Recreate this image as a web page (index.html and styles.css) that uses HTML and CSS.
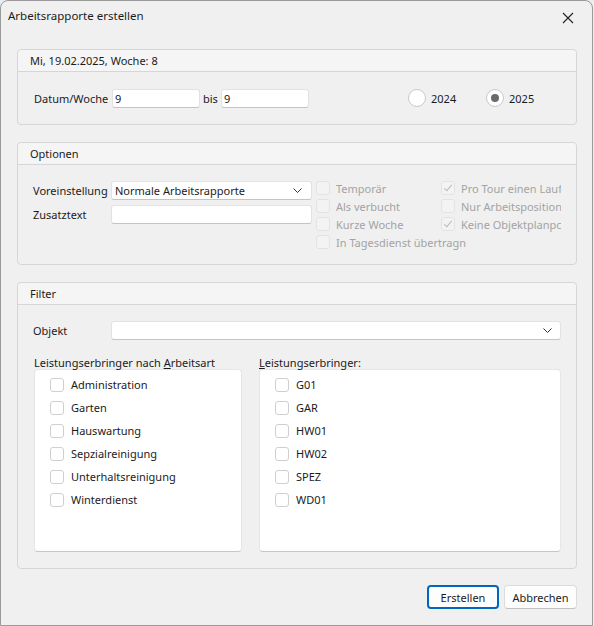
FILE: index.html
```html
<!DOCTYPE html>
<html lang="de">
<head>
    <meta charset="UTF-8">
    <title>Arbeitsrapporte erstellen</title>
    <link rel="stylesheet" href="styles.css">
</head>
<body>
    <div class="window">
        <div class="titlebar">
            <span class="title">Arbeitsrapporte erstellen</span>
            <svg class="close" width="12" height="12" viewBox="0 0 12 12"><path d="M1 1L11 11M11 1L1 11" stroke="#222" stroke-width="1.1" fill="none"/></svg>
        </div>
        <div class="content">
            <div class="group">
                <div class="group-head">Mi, 19.02.2025, Woche: 8</div>
                <div class="group-body row-week">
                    <span class="lbl wide">Datum/Woche</span>
                    <input class="field week" type="text" value="9">
                    <span class="lbl bis">bis</span>
                    <input class="field week" type="text" value="9">
                    <div class="radios">
                        <label class="radio"><span class="dot"></span>2024</label>
                        <label class="radio"><span class="dot on"></span>2025</label>
                    </div>
                </div>
            </div>

            <div class="group">
                <div class="group-head">Optionen</div>
                <div class="group-body options">
                    <div class="opt-form">
                        <div class="opt-row">
                            <span class="lbl wide">Voreinstellung</span>
                            <div class="field combo small">Normale Arbeitsrapporte
                                <svg class="chev" width="9" height="5" viewBox="0 0 9 5"><path d="M0.5 0.5L4.5 4.5L8.5 0.5" stroke="#333" fill="none"/></svg>
                            </div>
                        </div>
                        <div class="opt-row">
                            <span class="lbl wide">Zusatztext</span>
                            <div class="field small"></div>
                        </div>
                    </div>
                    <div class="checks">
                        <label class="chk off"><span class="box"></span>Temporär</label>
                        <label class="chk off"><span class="box checked"></span>Pro Tour einen Lauf</label>
                        <label class="chk off"><span class="box"></span>Als verbucht</label>
                        <label class="chk off"><span class="box"></span>Nur Arbeitsposition</label>
                        <label class="chk off"><span class="box"></span>Kurze Woche</label>
                        <label class="chk off"><span class="box checked"></span>Keine Objektplanpc</label>
                        <label class="chk off span2"><span class="box"></span>In Tagesdienst übertragn</label>
                    </div>
                </div>
            </div>

            <div class="group">
                <div class="group-head">Filter</div>
                <div class="group-body filter">
                    <div class="opt-row">
                        <span class="lbl wide">Objekt</span>
                        <div class="field combo grow">
                            <svg class="chev" width="9" height="5" viewBox="0 0 9 5"><path d="M0.5 0.5L4.5 4.5L8.5 0.5" stroke="#333" fill="none"/></svg>
                        </div>
                    </div>
                    <div class="lists">
                        <div class="list-col left">
                            <div class="list-title">Leistungserbringer nach <u>A</u>rbeitsart</div>
                            <div class="list">
                                <label class="chk"><span class="box"></span>Administration</label>
                                <label class="chk"><span class="box"></span>Garten</label>
                                <label class="chk"><span class="box"></span>Hauswartung</label>
                                <label class="chk"><span class="box"></span>Sepzialreinigung</label>
                                <label class="chk"><span class="box"></span>Unterhaltsreinigung</label>
                                <label class="chk"><span class="box"></span>Winterdienst</label>
                            </div>
                        </div>
                        <div class="list-col right">
                            <div class="list-title"><u>L</u>eistungserbringer:</div>
                            <div class="list">
                                <label class="chk"><span class="box"></span>G01</label>
                                <label class="chk"><span class="box"></span>GAR</label>
                                <label class="chk"><span class="box"></span>HW01</label>
                                <label class="chk"><span class="box"></span>HW02</label>
                                <label class="chk"><span class="box"></span>SPEZ</label>
                                <label class="chk"><span class="box"></span>WD01</label>
                            </div>
                        </div>
                    </div>
                </div>
            </div>

            <div class="buttons">
                <button class="btn primary">Erstellen</button>
                <button class="btn">Abbrechen</button>
            </div>
        </div>
    </div>
</body>
</html>
```

FILE: styles.css
```css
html, body {
    margin: 0;
    padding: 0;
    background-color: #e8eef4;
    font-family: "Noto Sans", "Open Sans", sans-serif;
    font-size: 11px;
    color: #1b1b1b;
}
.window {
    width: 593px;
    height: 626px;
    box-sizing: border-box;
    border: 1px solid #9a9a9a;
    border-radius: 8px 8px 0 0;
    background-color: #f0f0f0;
}
.titlebar {
    height: 33px;
    display: flex;
    align-items: center;
    justify-content: space-between;
    padding: 0 18px 0 7px;
}
.title {
    font-size: 11.5px;
    margin-top: -4px;
}
.content {
    padding: 0 15px 0 16px;
}
.group {
    margin-top: 15px;
    border: 1px solid #d6d6d6;
    border-radius: 4px;
}
.group + .group {
    margin-top: 17px;
}
.group-head {
    height: 21px;
    line-height: 21px;
    padding-left: 12px;
    background-color: #f5f5f5;
    border-bottom: 1px solid #d6d6d6;
    border-radius: 4px 4px 0 0;
}
.field {
    box-sizing: border-box;
    height: 19px;
    background: #fff;
    border: 1px solid #e2e2e2;
    border-bottom-color: #c4c4c4;
    border-radius: 3px;
    font: inherit;
    color: inherit;
    padding: 0 2px;
    outline: none;
    line-height: 17px;
}
.lbl {
    white-space: nowrap;
}
.lbl.wide {
    width: 78px;
    flex-shrink: 0;
}
.row-week {
    height: 52px;
    display: flex;
    align-items: center;
    padding-left: 16px;
}
.week {
    width: 88px;
}
.bis {
    width: 18px;
    margin-left: 3px;
}
.radios {
    display: flex;
    margin-left: 99px;
}
.radio {
    display: flex;
    align-items: center;
    width: 78px;
}
.dot {
    box-sizing: border-box;
    width: 18px;
    height: 18px;
    border-radius: 50%;
    border: 1px solid #c9c9c9;
    background: #fff;
    margin-right: 5px;
    position: relative;
}
.dot.on::after {
    content: "";
    position: absolute;
    left: 4px;
    top: 4px;
    width: 8px;
    height: 8px;
    border-radius: 50%;
    background: #6b6b6b;
}
.options {
    height: 99px;
    display: flex;
    padding: 14px 0 0 15px;
    box-sizing: border-box;
}
.opt-form {
    display: flex;
    flex-direction: column;
    gap: 5px;
    padding-top: 2px;
}
.opt-row {
    display: flex;
    align-items: center;
}
.small {
    width: 201px;
}
.combo {
    display: flex;
    align-items: center;
    justify-content: space-between;
    padding: 0 9px 0 3px;
}
.checks {
    display: grid;
    grid-template-columns: 125px 120px;
    grid-auto-rows: 18px;
    margin-left: 4px;
}
.span2 {
    grid-column: span 2;
}
.chk {
    display: flex;
    align-items: center;
    white-space: nowrap;
    overflow: hidden;
}
.box {
    box-sizing: border-box;
    width: 14px;
    height: 14px;
    border: 1px solid #cfcfcf;
    border-radius: 3px;
    background: #fff;
    margin-right: 7px;
    flex-shrink: 0;
    position: relative;
}
.chk.off {
    color: #a3a3a3;
}
.chk.off .box {
    border-color: #e3e3e3;
    background: #f3f3f3;
    margin-right: 6px;
}
.box.checked::after {
    content: "";
    position: absolute;
    left: 4px;
    top: 1px;
    width: 3px;
    height: 7px;
    border: solid #b9b9b9;
    border-width: 0 1px 1px 0;
    transform: rotate(40deg);
}
.filter {
    height: 263px;
    box-sizing: border-box;
    padding: 16px 15px 0 15px;
}
.grow {
    flex: 1;
    justify-content: flex-end;
    padding-right: 8px;
}
.lists {
    display: flex;
    gap: 17px;
    margin-top: 17px;
    padding-left: 1px;
}
.list-col.left {
    width: 208px;
}
.list-col.right {
    flex: 1;
}
.list-title {
    height: 12px;
    line-height: 12px;
}
.list {
    box-sizing: border-box;
    height: 183px;
    background: #fff;
    border: 1px solid #e6e6e6;
    border-bottom-color: #c6c6c6;
    border-radius: 4px;
    padding: 3px 0 0 15px;
}
.list .chk {
    height: 23px;
}
.buttons {
    display: flex;
    justify-content: flex-end;
    gap: 5px;
    margin-top: 16px;
}
.btn {
    box-sizing: border-box;
    height: 24px;
    background: #fdfdfd;
    border: 1px solid #dcdcdc;
    border-bottom-color: #c2c2c2;
    border-radius: 4px;
    font: inherit;
    color: inherit;
    padding: 0;
    width: 73px;
}
.btn.primary {
    width: 72px;
    border: 2px solid #0067c0;
}
```
